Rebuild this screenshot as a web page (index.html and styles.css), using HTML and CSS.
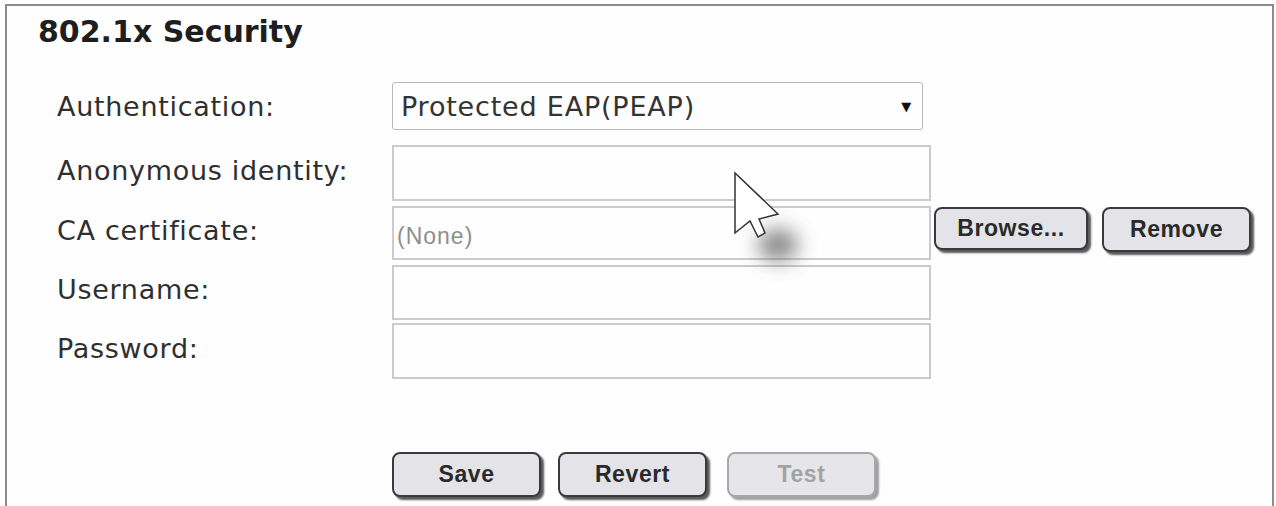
FILE: index.html
```html
<!DOCTYPE html>
<html lang="en">
<head>
  <meta charset="UTF-8" />
  <title>802.1x Security</title>
  <link rel="stylesheet" href="styles.css">
</head>
<body>

  <div class="panel">
    <h2 class="title">802.1x Security</h2>

    <div class="form">
      <div class="row row-auth">
        <label class="lbl">Authentication:</label>
        <div class="select">
          <span>Protected EAP(PEAP)</span>
          <span class="caret">&#9660;</span>
        </div>
      </div>

      <div class="row row-anon">
        <label class="lbl">Anonymous identity:</label>
        <div class="field"></div>
      </div>

      <div class="row row-ca">
        <label class="lbl">CA certificate:</label>
        <div class="field"><span class="placeholder">(None)</span></div>
        <button class="btn browse">Browse...</button>
        <button class="btn remove">Remove</button>
      </div>

      <div class="row row-user">
        <label class="lbl">Username:</label>
        <div class="field"></div>
      </div>

      <div class="row row-pass">
        <label class="lbl">Password:</label>
        <div class="field"></div>
      </div>
    </div>

    <div class="actions">
      <button class="btn">Save</button>
      <button class="btn revert">Revert</button>
      <button class="btn test" disabled>Test</button>
    </div>

    <!-- mouse pointer over the form -->
    <svg class="pointer" width="100" height="120" viewBox="0 0 100 120">
      <defs>
        <filter id="blur" x="-1" y="-1" width="3" height="3">
          <feGaussianBlur stdDeviation="10" />
        </filter>
      </defs>
      <ellipse cx="48" cy="74" rx="20" ry="16" fill="#555" opacity="0.7" filter="url(#blur)" />
      <polygon points="5,2 5,62 20,50 28,66 35,62 29,48 48,43" fill="#fff" stroke="#333" stroke-width="1.5" stroke-linejoin="miter" />
    </svg>
  </div>

</body>
</html>
```

FILE: styles.css
```css
body { margin: 0; background: #fff; font-family: 'DejaVu Sans', sans-serif; }

.panel {
  position: relative;
  margin: 4px 2px 0 5px; height: 520px;
  border: 2px solid #8c8c8c; border-bottom: none;
  background: #fefefe;
}
.title {
  margin: 0; padding: 8px 0 0 31px;
  font-size: 30px; font-weight: bold; color: #1e1e1e;
  line-height: 36px;
}

.form { margin: 32px 0 0 50px; }
.row { display: flex; align-items: center; margin-top: 5px; }
.row-auth { height: 48px; margin-top: 0; }
.row-anon { height: 56px; margin-top: 15px; }
.row-ca { height: 54px; }
.row-user { height: 55px; margin-top: 5px; }
.row-pass { height: 56px; margin-top: 3px; }

.lbl { width: 335px; flex: none; font-size: 27px; letter-spacing: 0.7px; color: #2f2f2f; padding-bottom: 6px; }
.row-auth .lbl { padding-bottom: 0; }

.select {
  width: 531px; height: 48px; box-sizing: border-box;
  border: 1px solid #b9b9b9; border-radius: 3px;
  display: flex; align-items: center; justify-content: space-between;
  padding: 0 10px 0 8px;
  font-size: 27px; letter-spacing: 0.8px; color: #333;
}
.caret { font-size: 13px; color: #111; }

.field {
  width: 539px; height: 100%; box-sizing: border-box; flex: none;
  border: 2px solid #cbcbcb;
  display: flex; align-items: center; padding-left: 3px;
}
.placeholder {
  font-family: 'Liberation Sans', Arial, sans-serif; font-size: 23px; letter-spacing: 1px;
  color: #8e8e8e; padding-top: 6px;
}

.btn {
  height: 43px; width: 149px; flex: none;
  background: #e3e3e8; color: #2a2a2a;
  border: 2px solid #3a3a3a; border-radius: 8px;
  box-shadow: 3px 3px 2px #5a5a5a;
  font-family: 'Liberation Sans', Arial, sans-serif; font-size: 23px; letter-spacing: 0.6px; font-weight: bold;
}
.row-ca .btn { align-self: flex-start; margin-top: 1px; }
.browse { width: 154px; margin-left: 3px; }
.remove { margin-left: 14px; height: 45px; }

.actions { display: flex; gap: 17px; margin: 73px 0 0 385px; }
.actions .btn { height: 45px; }
.actions .test { margin-left: 3px; color: #a3a3a3; border-color: #a8a8a8; background: #e6e6ea; box-shadow: 3px 3px 2px #a0a0a0; }

.pointer { position: absolute; left: 723px; top: 165px; }
```
